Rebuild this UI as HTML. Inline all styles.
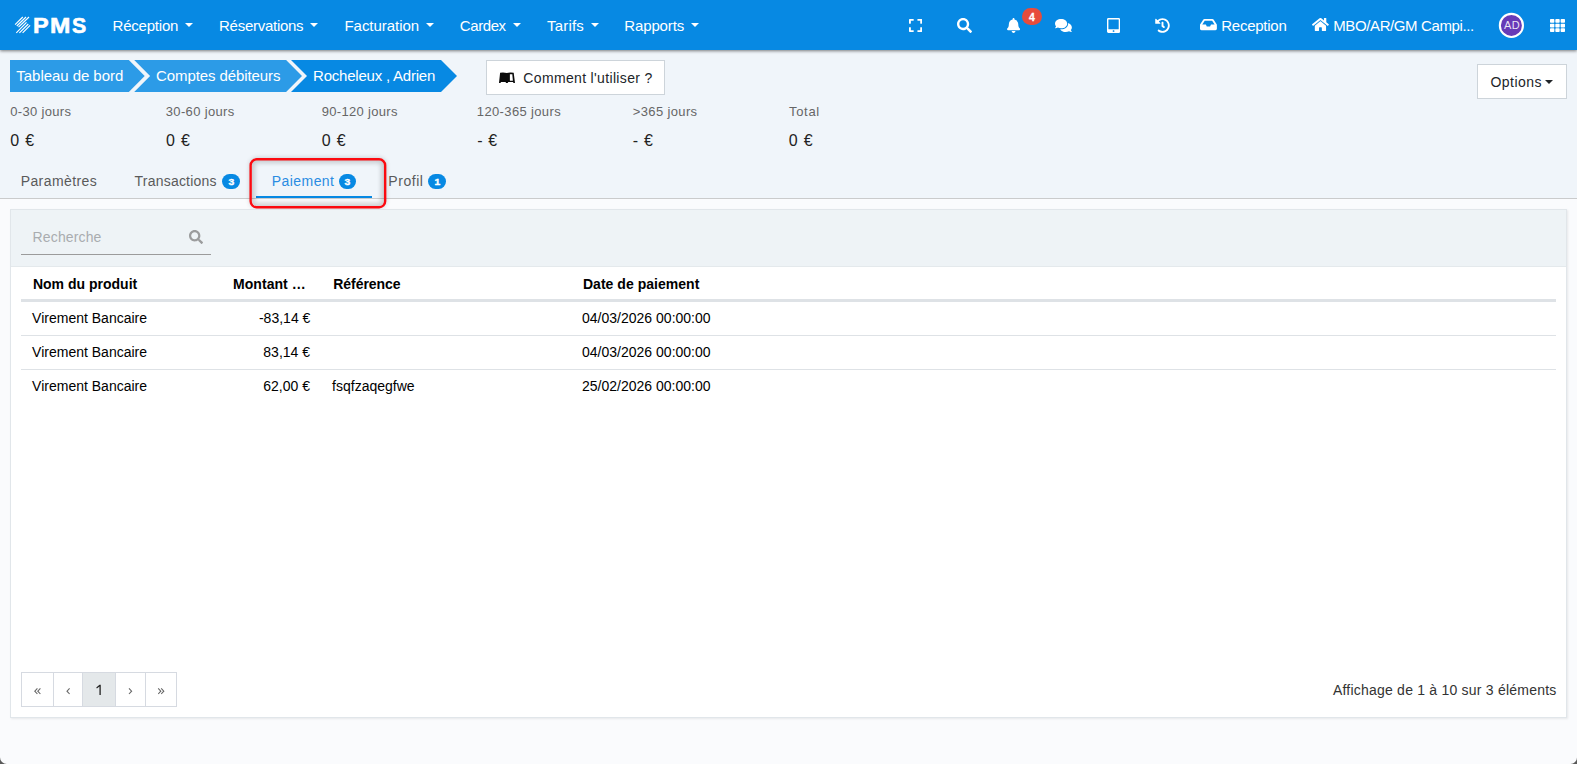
<!DOCTYPE html>
<html lang="fr">
<head>
<meta charset="utf-8">
<title>PMS</title>
<style>
*{box-sizing:border-box;margin:0;padding:0}
html,body{width:1577px;height:764px;overflow:hidden}
body{background:#fafbfd;font-family:"Liberation Sans",sans-serif;position:relative}
.t{position:absolute;white-space:pre;line-height:1;font-family:"Liberation Sans",sans-serif}
#top{position:absolute;left:0;top:0;width:1577px;height:198px;background:#f0f5fa}
#tabline{position:absolute;left:0;top:198px;width:1577px;height:1px;background:#cacbcc}
#nav{position:absolute;left:0;top:0;width:1577px;height:50px;background:#0789e3;box-shadow:0 1px 3px rgba(0,0,0,.5)}
.lg{top:14.9px;font-size:21.7px;font-weight:700;color:#fff;-webkit-text-stroke:0.6px #fff;transform-origin:0 0}
.caret{position:absolute;top:23px;width:0;height:0;border-left:4.2px solid transparent;border-right:4.2px solid transparent;border-top:4.4px solid #fff}
.badge{position:absolute;background:#0789e3;color:#fff;font-size:9px;-webkit-text-stroke:.35px #fff;padding-top:1px;font-weight:700;text-align:center;font-family:"Liberation Sans",sans-serif}
#nbadge{position:absolute;left:1022px;top:8px;width:20px;height:17px;border-radius:8.5px;background:#e74c3c;color:#fff;font-size:10.5px;font-weight:700;text-align:center;line-height:17px;padding-top:1px;-webkit-text-stroke:.3px #fff}
#avatar{position:absolute;left:1498.8px;top:12.8px;width:25.4px;height:25.4px;border-radius:50%;background:#673ab7;border:1.6px solid #fff}
.btn{position:absolute;background:#fff;border:1px solid #cdd4da}
#redbox{position:absolute;left:249.5px;top:158.2px;width:136.6px;height:50px;border-radius:7px;box-shadow:0 0 5px rgba(0,0,0,.2)}
#redin{position:absolute;left:251.6px;top:160.4px;width:132.6px;height:45.8px;border-radius:5px;box-shadow:inset 0 0 4px 3.5px rgba(0,0,0,.11),inset 0 0 7px rgba(0,0,0,.12)}
#uline{position:absolute;left:256px;top:196px;width:116px;height:2px;background:#0789e3}
#card{position:absolute;left:10px;top:209px;width:1557px;height:509px;background:#fff;border:1px solid #e1e6ea;box-shadow:1px 1px 2px rgba(0,0,0,.08)}
#tool{position:absolute;left:0;top:0;width:1555px;height:57px;background:#eef3f6;border-bottom:1px solid #e4e9ec}
.hl{position:absolute;left:21px;width:1535px;background:#dee2e6}
.pg{position:absolute;top:672px;height:35px;border:1px solid #d6dae1;background:#fff}
.ch{position:absolute;fill:none;stroke:#666;stroke-width:1.1}
</style>
</head>
<body>
<div id="top"></div>
<div id="tabline"></div>
<div id="nav"></div>
<svg style="position:absolute;left:0;top:0" width="100" height="50" viewBox="0 0 100 50"><g stroke="#fff" stroke-width="1.15" fill="none"><path d="M15.1 24.7L22.8 17M16.8 26L26 17M18.5 27.2L29 17M16.3 32.8L26.5 22.3M19.4 32.8L28.3 24M22.6 32.8L30.1 25.3"/></g></svg>
<span class="t lg" style="left:33.1px;transform:scaleX(1.082)">P</span><span class="t lg" style="left:49.6px;transform:scaleX(1.128)">M</span><span class="t lg" style="left:71.8px;transform:scaleX(0.981)">S</span>
<i class="caret" style="left:184.9px"></i><i class="caret" style="left:309.5px"></i><i class="caret" style="left:425.7px"></i><i class="caret" style="left:512.6px"></i><i class="caret" style="left:590.6px"></i><i class="caret" style="left:690.9px"></i>
<svg style="position:absolute;left:908.80px;top:18.00px" width="13.12" height="15.00" viewBox="0 0 448 512"><path fill="#fff" d="M0 180V56c0-13.3 10.7-24 24-24h124c6.600 0 12 5.400 12 12v40c0 6.600-5.400 12-12 12H64v84c0 6.600-5.400 12-12 12H12c-6.600 0-12-5.400-12-12zM288 44v40c0 6.600 5.400 12 12 12h84v84c0 6.600 5.400 12 12 12h40c6.600 0 12-5.400 12-12V56c0-13.300-10.700-24-24-24H300c-6.600 0-12 5.400-12 12zm148 276h-40c-6.600 0-12 5.400-12 12v84h-84c-6.600 0-12 5.400-12 12v40c0 6.600 5.400 12 12 12h124c13.300 0 24-10.700 24-24V332c0-6.600-5.400-12-12-12zM160 468v-40c0-6.600-5.400-12-12-12H64v-84c0-6.600-5.400-12-12-12H12c-6.600 0-12 5.400-12 12v124c0 13.300 10.700 24 24 24h124c6.600 0 12-5.400 12-12z"/></svg><svg style="position:absolute;left:957.00px;top:18.20px" width="15.00" height="15.00" viewBox="0 0 512 512"><path fill="#fff" d="M505 442.700L405.300 343c-4.500-4.500-10.600-7-17-7H372c27.600-35.300 44-79.700 44-128C416 93.100 322.900 0 208 0S0 93.100 0 208s93.100 208 208 208c48.300 0 92.700-16.400 128-44v16.300c0 6.400 2.500 12.500 7 17l99.700 99.700c9.400 9.400 24.600 9.400 33.900 0l28.300-28.300c9.400-9.400 9.400-24.600.1-34zM208 336c-70.700 0-128-57.200-128-128 0-70.700 57.200-128 128-128 70.700 0 128 57.200 128 128 0 70.700-57.200 128-128 128z"/></svg><svg style="position:absolute;left:1007.00px;top:18.20px" width="13.12" height="15.00" viewBox="0 0 448 512"><path fill="#fff" d="M224 512c35.320 0 63.970-28.650 63.970-64H160.030c0 35.350 28.650 64 63.970 64zm215.390-149.710c-19.320-20.760-55.470-51.990-55.470-154.290 0-77.700-54.480-139.900-127.940-155.160V32c0-17.670-14.320-32-31.980-32s-31.980 14.330-31.980 32v20.840C118.560 68.100 64.080 130.300 64.080 208c0 102.300-36.150 133.530-55.470 154.290-6 6.450-8.660 14.160-8.610 21.710.11 16.400 12.980 32 32.100 32h383.800c19.120 0 32-15.600 32.100-32 .05-7.550-2.610-15.270-8.610-21.710z"/></svg><svg style="position:absolute;left:1055.30px;top:18.00px" width="16.88" height="15.00" viewBox="0 0 576 512"><path fill="#fff" d="M416 192c0-88.400-93.100-160-208-160S0 103.600 0 192c0 34.300 14.100 65.900 38 92-13.400 30.200-35.500 54.200-35.800 54.500-2.200 2.300-2.800 5.700-1.500 8.700S4.800 352 8 352c36.600 0 66.900-12.300 88.700-25 32.200 15.700 70.300 25 111.300 25 114.900 0 208-71.600 208-160zm122 220c23.900-26 38-57.700 38-92 0-66.900-53.500-124.200-129.300-148.100.9 6.600 1.300 13.300 1.300 20.100 0 105.900-107.700 192-240 192-10.800 0-21.300-.8-31.700-1.900C207.800 439.600 281.800 480 368 480c41 0 79.100-9.200 111.300-25 21.800 12.700 52.100 25 88.700 25 3.200 0 6.100-1.900 7.300-4.800 1.300-2.900.7-6.300-1.500-8.700-.3-.3-22.400-24.200-35.800-54.500z"/></svg><svg style="position:absolute;left:1107.00px;top:18.20px" width="13.12" height="15.00" viewBox="0 0 448 512"><path fill="#fff" d="M400 0H48C21.500 0 0 21.500 0 48v416c0 26.500 21.500 48 48 48h352c26.500 0 48-21.500 48-48V48c0-26.500-21.500-48-48-48zM224 480c-17.700 0-32-14.300-32-32s14.300-32 32-32 32 14.300 32 32-14.300 32-32 32zm176-108c0 6.600-5.400 12-12 12H60c-6.600 0-12-5.400-12-12V60c0-6.600 5.400-12 12-12h328c6.600 0 12 5.400 12 12v312z"/></svg><svg style="position:absolute;left:1155.00px;top:18.20px" width="15.00" height="15.00" viewBox="0 0 512 512"><path fill="#fff" d="M504 255.531c.253 136.640-111.180 248.372-247.820 248.468-59.015.042-113.223-20.530-155.822-54.911-11.077-8.940-11.905-25.541-1.839-35.607l11.267-11.267c8.609-8.609 22.353-9.551 31.891-1.984C173.062 425.135 212.781 440 256 440c101.705 0 184-82.311 184-184 0-101.705-82.311-184-184-184-48.814 0-93.149 18.969-126.068 49.932l50.754 50.754c10.080 10.080 2.941 27.314-11.313 27.314H24c-8.837 0-16-7.163-16-16V38.627c0-14.254 17.234-21.393 27.314-11.314l49.372 49.372C129.209 34.136 189.552 8 256 8c136.810 0 247.747 110.780 248 247.531zm-180.912 78.784l9.823-12.630c8.138-10.463 6.253-25.542-4.210-33.679L288 256.349V152c0-13.255-10.745-24-24-24h-16c-13.255 0-24 10.745-24 24v135.651l65.409 50.874c10.463 8.137 25.541 6.253 33.679-4.210z"/></svg><svg style="position:absolute;left:1199.80px;top:17.40px" width="16.88" height="15.00" viewBox="0 0 576 512"><path fill="#fff" d="M567.938 243.908L462.250 85.374A48.003 48.003 0 0 0 422.311 64H153.689a48 48 0 0 0-39.938 21.374L8.062 243.908A47.994 47.994 0 0 0 0 270.533V400c0 26.510 21.490 48 48 48h480c26.510 0 48-21.490 48-48V270.533a47.994 47.994 0 0 0-8.062-26.625zM162.252 128h251.497l85.333 128H376l-32 64H232l-32-64H76.918l85.334-128z"/></svg><svg style="position:absolute;left:1312.30px;top:17.00px" width="16.88" height="15.00" viewBox="0 0 576 512"><path fill="#fff" d="M280.370 148.260L96 300.110V464a16 16 0 0 0 16 16l112.060-.290a16 16 0 0 0 15.920-16V368a16 16 0 0 1 16-16h64a16 16 0 0 1 16 16v95.640a16 16 0 0 0 16 16.050L464 480a16 16 0 0 0 16-16V300L295.670 148.260a12.190 12.190 0 0 0-15.300 0zM571.600 251.470L488 182.560V44.050a12 12 0 0 0-12-12h-56a12 12 0 0 0-12 12v72.610L318.470 43a48 48 0 0 0-61 0L4.340 251.470a12 12 0 0 0-1.600 16.900l25.500 31A12 12 0 0 0 45.150 301l235.220-193.740a12.190 12.190 0 0 1 15.300 0L530.900 301a12 12 0 0 0 16.900-1.600l25.500-31a12 12 0 0 0-1.700-16.930z"/></svg><svg style="position:absolute;left:1549.90px;top:18.00px" width="15.00" height="15.00" viewBox="0 0 512 512"><path fill="#fff" d="M149.333 56v80c0 13.255-10.745 24-24 24H24c-13.255 0-24-10.745-24-24V56c0-13.255 10.745-24 24-24h101.333c13.255 0 24 10.745 24 24zm181.334 240v-80c0-13.255-10.745-24-24-24H205.333c-13.255 0-24 10.745-24 24v80c0 13.255 10.745 24 24 24h101.333c13.256 0 24.001-10.745 24.001-24zm32-240v80c0 13.255 10.745 24 24 24H488c13.255 0 24-10.745 24-24V56c0-13.255-10.745-24-24-24H386.667c-13.255 0-24 10.745-24 24zm-32 80V56c0-13.255-10.745-24-24-24H205.333c-13.255 0-24 10.745-24 24v80c0 13.255 10.745 24 24 24h101.333c13.256 0 24.001-10.745 24.001-24zm-205.334 56H24c-13.255 0-24 10.745-24 24v80c0 13.255 10.745 24 24 24h101.333c13.255 0 24-10.745 24-24v-80c0-13.255-10.745-24-24-24zM0 376v80c0 13.255 10.745 24 24 24h101.333c13.255 0 24-10.745 24-24v-80c0-13.255-10.745-24-24-24H24c-13.255 0-24 10.745-24 24zm386.667-56H488c13.255 0 24-10.745 24-24v-80c0-13.255-10.745-24-24-24H386.667c-13.255 0-24 10.745-24 24v80c0 13.255 10.745 24 24 24zm0 160H488c13.255 0 24-10.745 24-24v-80c0-13.255-10.745-24-24-24H386.667c-13.255 0-24 10.745-24 24v80c0 13.255 10.745 24 24 24zM181.333 376v80c0 13.255 10.745 24 24 24h101.333c13.255 0 24-10.745 24-24v-80c0-13.255-10.745-24-24-24H205.333c-13.255 0-24 10.745-24 24z"/></svg>
<span id="nbadge">4</span>
<svg style="position:absolute;left:1495px;top:9px" width="33" height="33" viewBox="0 0 33 33"><circle cx="16.4" cy="16.4" r="11.55" fill="#673ab7" stroke="#fff" stroke-width="2.1"/></svg>
<svg style="position:absolute;left:0;top:60px" width="470" height="32" viewBox="0 0 470 32">
<polygon fill="#2c9be7" points="10,0 128.800,0 144.700,16 128.800,32 10,32"/>
<polygon fill="#2c9be7" points="134.200,0 286.100,0 302,16 286.100,32 134.200,32 150.100,16"/>
<polygon fill="#0789e3" points="291,0 441,0 457,16 441,32 291,32 307,16"/>
</svg>
<div class="btn" style="left:486px;top:60px;width:179px;height:35px"></div>
<svg style="position:absolute;left:498px;top:71px" width="18" height="13" viewBox="0 0 18 13"><path fill="#0a0a0a" d="M2.100 1.700Q5.500 1.100 8.800 1.900Q12.200 1.100 15.700 1.700L17 12H15.300L15.200 11.100H10.200L9.700 12H8L7.600 11.100H2.800L2.700 12H1Z"/><path fill="#fff" d="M11.900 3.200H14.300L14.900 9.700H11.900Z"/></svg>
<div class="btn" style="left:1477px;top:64px;width:90px;height:35px"></div>
<i style="position:absolute;left:1545.100px;top:80.100px;width:0;height:0;border-left:4.800px solid transparent;border-right:4.800px solid transparent;border-top:4.800px solid #212529"></i>
<div id="uline"></div>
<span class="badge" style="left:222px;top:173.8px;width:18.2px;height:15.2px;line-height:15.2px;border-radius:7.6px"><b style="display:inline-block;transform:scaleX(1.15)">3</b></span><span class="badge" style="left:339px;top:173.8px;width:17.2px;height:15.2px;line-height:15.2px;border-radius:7.6px"><b style="display:inline-block;transform:scaleX(1.15)">3</b></span><span class="badge" style="left:428px;top:173.8px;width:18.2px;height:15.2px;line-height:15.2px;border-radius:7.6px"><b style="display:inline-block;transform:scaleX(1.15)">1</b></span>
<div id="redbox"></div><div id="redin"></div>
<svg style="position:absolute;left:240px;top:150px" width="160" height="70" viewBox="240 150 160 70"><rect x="250.650" y="159.300" width="134.500" height="47.950" rx="6" fill="none" stroke="#fb0a10" stroke-width="2.400"/></svg>
<div id="card"><div id="tool"></div></div>
<div style="position:absolute;left:21px;top:254px;width:190px;height:1px;background:#9b9b9b"></div>
<svg style="position:absolute;left:189.00px;top:230.00px" width="14.00" height="14.00" viewBox="0 0 512 512"><path fill="#9b9c9d" d="M505 442.700L405.300 343c-4.500-4.500-10.600-7-17-7H372c27.600-35.300 44-79.700 44-128C416 93.100 322.900 0 208 0S0 93.100 0 208s93.100 208 208 208c48.300 0 92.700-16.400 128-44v16.300c0 6.400 2.500 12.500 7 17l99.700 99.700c9.400 9.400 24.600 9.400 33.900 0l28.300-28.300c9.400-9.400 9.400-24.600.1-34zM208 336c-70.700 0-128-57.200-128-128 0-70.700 57.200-128 128-128 70.700 0 128 57.200 128 128 0 70.700-57.200 128-128 128z"/></svg>
<div class="hl" style="top:299px;height:2.6px"></div>
<div class="hl" style="top:335px;height:1px"></div>
<div class="hl" style="top:369px;height:1px"></div>
<div class="pg" style="left:21px;width:33px"></div>
<div class="pg" style="left:53px;width:30px"></div>
<div class="pg" style="left:82px;width:34px;background:#e4e8ea"></div>
<div class="pg" style="left:115px;width:31px"></div>
<div class="pg" style="left:145px;width:32px"></div>
<svg style="position:absolute;left:94px;top:683px" width="10" height="14" viewBox="0 0 10 14"><path fill="#222" d="M5.500 1.800H6.750V11.900H5.450V3.450L2.900 5.400L2.250 4.500Z"/></svg>
<svg class="ch" style="left:30px;top:684px" width="140" height="14" viewBox="0 0 140 14"><path d="M7.4 4.4L4.8 7.2L7.4 10M10.4 4.4L7.8 7.2L10.4 10M39.6 4.4L37 7.2L39.6 10M99 4.4L101.6 7.2L99 10M128.2 4.4L130.8 7.2L128.2 10M131.2 4.4L133.8 7.2L131.2 10"/></svg>
<span class="t" style="left:112.55px;top:17.70px;font-size:15px;color:#fff;letter-spacing:-0.217px">Réception</span><span class="t" style="left:219.05px;top:17.70px;font-size:15px;color:#fff;letter-spacing:-0.272px">Réservations</span><span class="t" style="left:344.45px;top:17.70px;font-size:15px;color:#fff;letter-spacing:-0.031px">Facturation</span><span class="t" style="left:459.77px;top:17.70px;font-size:15px;color:#fff;letter-spacing:-0.403px">Cardex</span><span class="t" style="left:547.06px;top:17.70px;font-size:15px;color:#fff;letter-spacing:0.189px">Tarifs</span><span class="t" style="left:624.35px;top:17.70px;font-size:15px;color:#fff;letter-spacing:-0.149px">Rapports</span><span class="t" style="left:1221.25px;top:17.70px;font-size:15px;color:#fff;letter-spacing:-0.255px">Reception</span><span class="t" style="left:1333.25px;top:17.70px;font-size:15px;color:#fff;letter-spacing:-0.392px">MBO/AR/GM Campi...</span><span class="t" style="left:16.36px;top:67.80px;font-size:15px;color:#fff;letter-spacing:-0.051px">Tableau de bord</span><span class="t" style="left:156.07px;top:67.80px;font-size:15px;color:#fff;letter-spacing:-0.092px">Comptes débiteurs</span><span class="t" style="left:313.05px;top:67.80px;font-size:15px;color:#fff;letter-spacing:-0.217px">Rocheleux , Adrien</span><span class="t" style="left:523.30px;top:70.60px;font-size:14px;color:#212529;letter-spacing:0.344px">Comment l&#x27;utiliser ?</span><span class="t" style="left:1490.46px;top:74.60px;font-size:14px;color:#212529;letter-spacing:0.484px">Options</span><span class="t" style="left:10.27px;top:104.90px;font-size:13px;color:#666;letter-spacing:0.312px">0-30 jours</span><span class="t" style="left:165.81px;top:104.90px;font-size:13px;color:#666;letter-spacing:0.335px">30-60 jours</span><span class="t" style="left:321.66px;top:104.90px;font-size:13px;color:#666;letter-spacing:0.319px">90-120 jours</span><span class="t" style="left:476.83px;top:104.90px;font-size:13px;color:#666;letter-spacing:0.360px">120-365 jours</span><span class="t" style="left:632.76px;top:104.90px;font-size:13px;color:#666;letter-spacing:0.367px">&gt;365 jours</span><span class="t" style="left:789.09px;top:104.90px;font-size:13px;color:#666;letter-spacing:0.657px">Total</span><span class="t" style="left:10.19px;top:132.70px;font-size:16px;color:#222;letter-spacing:0.866px">0 €</span><span class="t" style="left:165.89px;top:132.70px;font-size:16px;color:#222;letter-spacing:0.866px">0 €</span><span class="t" style="left:321.69px;top:132.70px;font-size:16px;color:#222;letter-spacing:0.816px">0 €</span><span class="t" style="left:477.23px;top:132.70px;font-size:16px;color:#222;letter-spacing:0.583px">- €</span><span class="t" style="left:632.73px;top:132.70px;font-size:16px;color:#222;letter-spacing:0.783px">- €</span><span class="t" style="left:788.79px;top:132.70px;font-size:16px;color:#222;letter-spacing:0.816px">0 €</span><span class="t" style="left:20.70px;top:173.60px;font-size:14px;color:#5a5a5a;letter-spacing:0.406px">Paramètres</span><span class="t" style="left:134.49px;top:173.60px;font-size:14px;color:#5a5a5a;letter-spacing:0.226px">Transactions</span><span class="t" style="left:271.80px;top:173.60px;font-size:14px;color:#2a8ce2;letter-spacing:0.430px">Paiement</span><span class="t" style="left:388.30px;top:173.60px;font-size:14px;color:#5a5a5a;letter-spacing:0.553px">Profil</span><span class="t" style="left:32.60px;top:230.00px;font-size:14px;color:#a9acaf;letter-spacing:0.130px">Recherche</span><span class="t" style="left:32.96px;top:277.10px;font-size:14px;color:#000;letter-spacing:0.004px;font-weight:700">Nom du produit</span><span class="t" style="left:233.06px;top:277.10px;font-size:14px;color:#000;letter-spacing:0.039px;font-weight:700">Montant …</span><span class="t" style="left:333.16px;top:277.10px;font-size:14px;color:#000;letter-spacing:-0.028px;font-weight:700">Référence</span><span class="t" style="left:582.96px;top:277.10px;font-size:14px;color:#000;letter-spacing:0.028px;font-weight:700">Date de paiement</span><span class="t" style="left:32.08px;top:311.10px;font-size:14px;color:#000;letter-spacing:0.003px">Virement Bancaire</span><span class="t" style="left:258.94px;top:311.10px;font-size:14px;color:#000;letter-spacing:0.011px">-83,14 €</span><span class="t" style="left:582.00px;top:311.10px;font-size:14px;color:#000;letter-spacing:0.008px">04/03/2026 00:00:00</span><span class="t" style="left:32.08px;top:345.10px;font-size:14px;color:#000;letter-spacing:0.003px">Virement Bancaire</span><span class="t" style="left:263.34px;top:345.10px;font-size:14px;color:#000;letter-spacing:0.008px">83,14 €</span><span class="t" style="left:582.00px;top:345.10px;font-size:14px;color:#000;letter-spacing:0.008px">04/03/2026 00:00:00</span><span class="t" style="left:32.08px;top:379.10px;font-size:14px;color:#000;letter-spacing:0.003px">Virement Bancaire</span><span class="t" style="left:263.25px;top:379.10px;font-size:14px;color:#000;letter-spacing:0.022px">62,00 €</span><span class="t" style="left:332.11px;top:379.10px;font-size:14px;color:#000;letter-spacing:-0.007px">fsqfzaqegfwe</span><span class="t" style="left:581.89px;top:379.10px;font-size:14px;color:#000;letter-spacing:0.014px">25/02/2026 00:00:00</span><span class="t" style="left:1332.93px;top:682.80px;font-size:14px;color:#333;letter-spacing:0.219px">Affichage de 1 à 10 sur 3 éléments</span><span class="t" style="left:1504.12px;top:20.00px;font-size:11px;color:rgba(255,255,255,.88);letter-spacing:0.209px">AD</span>
<svg style="position:absolute;left:0;top:754px" width="1577" height="10" viewBox="0 0 1577 10"><path fill="#5a5a5a" d="M0 10V3.2A6.800 6.800 0 0 0 6.800 10Z"/><path fill="#5a5a5a" d="M1577 10V3.500A6.500 6.500 0 0 1 1570.500 10Z"/></svg>
</body>
</html>
